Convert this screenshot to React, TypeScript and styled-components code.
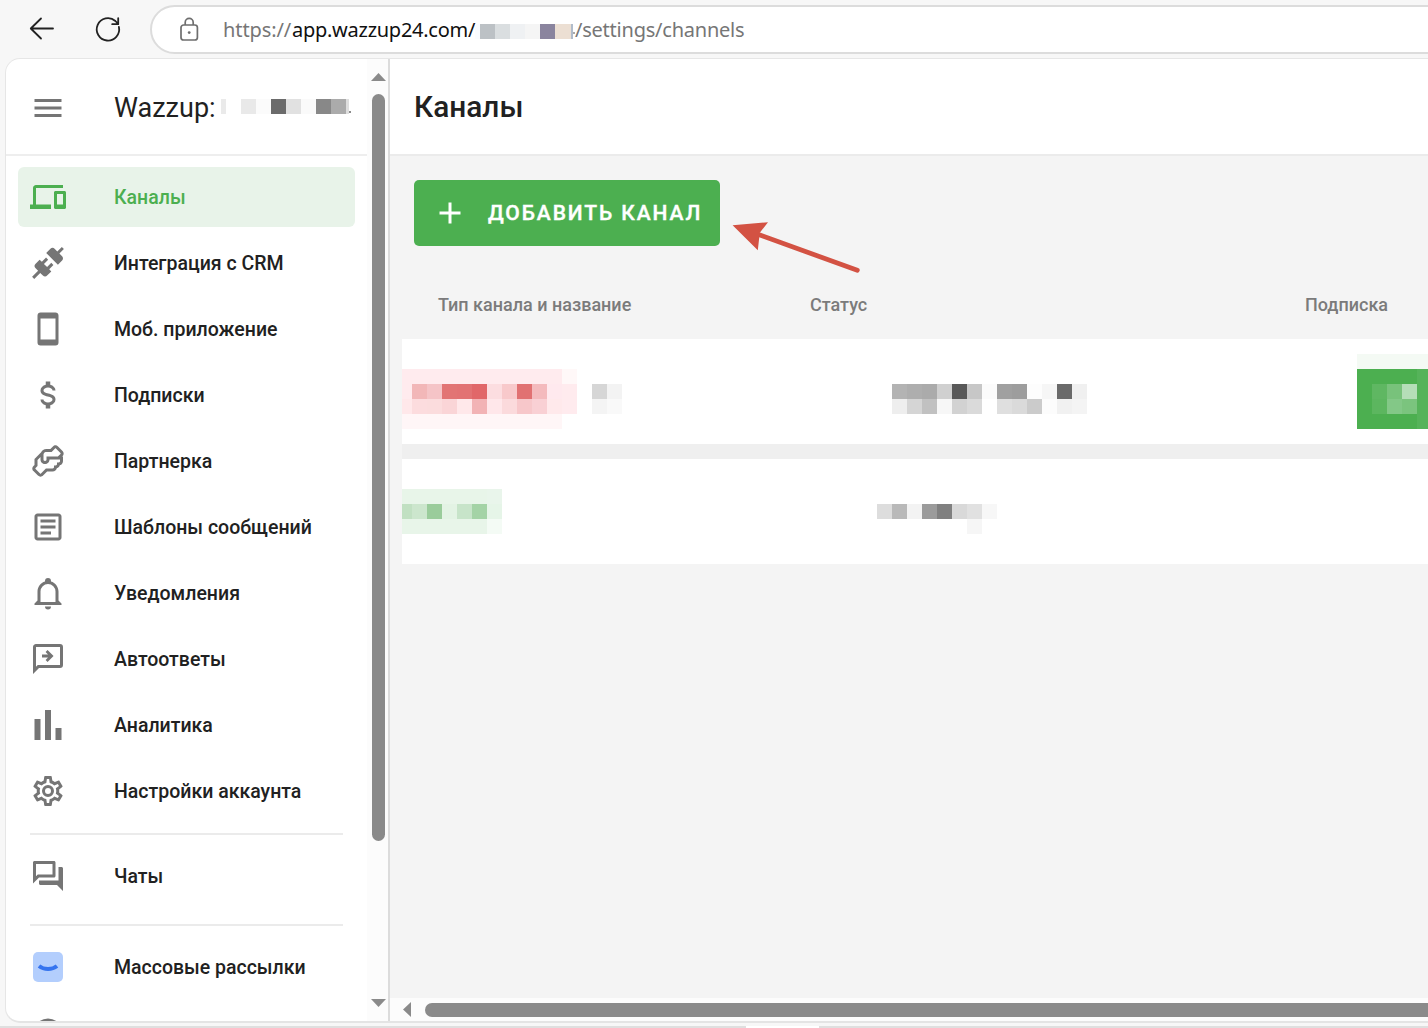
import React from "react";
import styled, { createGlobalStyle } from "styled-components";

const GlobalStyle = createGlobalStyle`
  * { box-sizing: border-box; }
  html, body { margin: 0; padding: 0; }
  body {
    width: 1428px;
    height: 1028px;
    overflow: hidden;
    background: #f7f7f7;
    font-family: Roboto, "Liberation Sans", sans-serif;
    color: #212121;
  }
`;

const Window = styled.div`
  display: flex;
  flex-direction: column;
  width: 1428px;
  height: 1028px;
  overflow: hidden;
`;

/* Browser toolbar */

const Toolbar = styled.header`
  display: flex;
  flex: none;
  align-items: flex-start;
  height: 58px;
  padding-top: 5px;
`;

const ToolButtons = styled.div`
  display: flex;
  flex: none;
  gap: 30px;
  width: 150px;
  height: 48px;
  padding-left: 24px;
  align-items: center;
`;

const AddressBar = styled.div`
  display: flex;
  flex: none;
  align-items: center;
  width: 1320px;
  height: 49px;
  padding-left: 25px;
  background: #fff;
  border: 2px solid #dcdcdc;
  border-radius: 25px;
`;

const Url = styled.div`
  display: flex;
  align-items: center;
  margin-left: 22px;
  height: 45px;
  font-family: "Noto Sans", "Open Sans", sans-serif;
  font-size: 20px;
  color: #767676;
  white-space: nowrap;
`;

const UrlPart = styled.span<{ $width: number; $strong?: boolean; $spacing: number }>`
  display: block;
  width: ${(p) => p.$width}px;
  letter-spacing: ${(p) => p.$spacing}px;
  color: ${(p) => (p.$strong ? "#101010" : "#767676")};
`;

/* Page frame */

const Page = styled.div`
  display: flex;
  flex: none;
  width: 1440px;
  height: 965px;
  margin-left: 5px;
  background: #fff;
  border: 1px solid #e6e6e6;
  border-bottom: 2px solid #e4e4e4;
  border-radius: 15px 0 0 15px;
  overflow: hidden;
`;

const Sidebar = styled.aside`
  display: flex;
  flex: none;
  width: 384px;
  border-right: 2px solid #dcdcdc;
`;

const SidebarContent = styled.div`
  flex: none;
  width: 361px;
  height: 962px;
  overflow: hidden;
`;

const Brand = styled.div`
  display: flex;
  align-items: center;
  height: 97px;
  padding: 2px 0 0 24px;
  border-bottom: 2px solid #eeeeee;
  color: #212121;
  svg { color: #757575; }
`;

const BrandName = styled.div`
  width: 107px;
  margin-left: 48px;
  font-size: 27px;
  line-height: 36px;
`;

const Censored = styled.div<{ $above?: number; $below?: number }>`
  display: flex;
  flex: none;
  align-items: center;
  margin-top: ${(p) => p.$above ?? 0}px;
  margin-bottom: ${(p) => p.$below ?? 0}px;
`;

/* The sliver of a glyph that shows past the tiles */
const Speck = styled.i<{ $drop: number; $c: string }>`
  width: 2px;
  height: 2px;
  margin-top: ${(p) => p.$drop}px;
  background: ${(p) => p.$c};
`;

const Nav = styled.nav`
  display: flex;
  flex-direction: column;
  gap: 6px;
  padding: 11px 12px 0;
`;

const NavItem = styled.a<{ $active?: boolean }>`
  display: flex;
  flex: none;
  align-items: center;
  gap: 48px;
  height: 60px;
  padding-left: 12px;
  border-radius: 6px;
  font-size: 19.5px;
  font-weight: 500;
  white-space: nowrap;
  color: ${(p) => (p.$active ? "#4caf50" : "#212121")};
  background: ${(p) => (p.$active ? "#e8f3e9" : "transparent")};
  svg { color: ${(p) => (p.$active ? "#4caf50" : "#757575")}; }
`;

const NavLabel = styled.span`
  padding-top: 1px;
`;

const NavDivider = styled.hr<{ $before: number; $after: number }>`
  flex: none;
  width: 313px;
  height: 2px;
  margin: ${(p) => p.$before}px 0 ${(p) => p.$after}px 12px;
  border: 0;
  background: #ebebeb;
`;

const VScroll = styled.div`
  display: flex;
  flex-direction: column;
  align-items: center;
  width: 21px;
  padding: 14px 0 14px 2px;
  background: #fcfcfc;
`;

const VThumb = styled.div`
  width: 13px;
  height: 747px;
  margin: 13px 0 auto;
  border-radius: 7px;
  background: #8a8a8a;
`;

/* Main area */

const Main = styled.main`
  display: flex;
  flex-direction: column;
  flex: 1;
  background: #f4f4f4;
`;

const Title = styled.h1`
  flex: none;
  height: 97px;
  margin: 0;
  padding: 30px 0 0 24px;
  font-size: 29.8px;
  line-height: 36px;
  font-weight: 500;
  background: #fff;
  border-bottom: 2px solid #ebebeb;
`;

const Actions = styled.div`
  display: flex;
  padding: 24px 24px 0;
`;

const AddButton = styled.button`
  position: relative;
  display: flex;
  align-items: center;
  width: 306px;
  height: 66px;
  padding: 0 0 0 18px;
  border: 0;
  border-radius: 5px;
  background: #4caf50;
  color: #fff;
  font-family: inherit;
  font-size: 21px;
  font-weight: 500;
  letter-spacing: 1.9px;
  -webkit-text-stroke: 0.4px #fff;
  white-space: nowrap;
  svg:first-child { margin-right: 20px; }
`;

const Pointer = styled.svg`
  position: absolute;
  left: 314px;
  top: 35px;
  overflow: visible;
`;

const columns = "408px 495px 1fr";

const TableHead = styled.div`
  display: grid;
  grid-template-columns: ${columns};
  align-items: center;
  height: 93px;
  padding-top: 24px;
  margin-left: 12px;
  font-size: 18px;
  font-weight: 500;
  color: #7b7b7b;
  span:first-child { padding-left: 36px; }
`;

const Table = styled.div`
  display: flex;
  flex-direction: column;
  gap: 15px;
  margin-left: 12px;
  background: #efefef;
`;

const Row = styled.div`
  display: grid;
  grid-template-columns: ${columns};
  height: 105px;
  background: #fff;
`;

const Cell = styled.div<{ $left?: number; $top: number }>`
  padding: ${(p) => p.$top}px 0 0 ${(p) => p.$left ?? 0}px;
`;

const HScroll = styled.div`
  display: flex;
  align-items: center;
  height: 23px;
  margin-top: auto;
  padding-left: 13px;
  background: #fcfcfc;
`;

const HThumb = styled.div`
  flex: 1;
  height: 14px;
  margin-left: 14px;
  border-radius: 7px;
  background: #8a8a8a;
`;

const BottomEdge = styled.footer`
  display: flex;
  flex: none;
  height: 2px;
  margin-top: 3px;
  background: #dfdfdf;
`;

const BottomHandle = styled.div`
  width: 73px;
  margin-left: 746px;
  background: #fff;
`;

/* Censored fragments: strips of solid 15px tiles */

const MosaicBox = styled.div`
  display: flex;
  flex: none;
  flex-direction: column;
`;

const Strip = styled.div`
  display: flex;
  height: 15px;
`;

const Tile = styled.i<{ $c: string; $w: number }>`
  flex: none;
  width: ${(p) => p.$w}px;
  background: ${(p) => p.$c};
`;

/* Each tile is "colour" or "colour:width"; "-" leaves the tile empty. */
const Mosaic = ({ rows }: { rows: string[] }) => (
  <MosaicBox>
    {rows.map((row, y) => (
      <Strip key={y}>
        {row.split(" ").map((t, x) => {
          const [c, w] = t.split(":");
          return <Tile key={x} $c={c === "-" ? "transparent" : "#" + c} $w={w ? Number(w) : 15} />;
        })}
      </Strip>
    ))}
  </MosaicBox>
);

/* Icons */

const IconSvg = styled.svg`
  display: block;
  flex: none;
`;

const Icon = ({ d }: { d: string }) => (
  <IconSvg width="36" height="36" viewBox="0 0 24 24" fill="currentColor">
    <path fillRule="evenodd" d={d} />
  </IconSvg>
);

const paths = {
  menu: "M3 6h18v2H3V6m0 5h18v2H3v-2m0 5h18v2H3v-2Z",
  plus: "M19 13h-6v6h-2v-6H5v-2h6V5h2v6h6v2Z",
  devices:
    "M4 6h18V4H4c-1.1 0-2 .9-2 2v11H0v3h14v-3H4V6zm19 2h-6c-.55 0-1 .45-1 1v10c0 .55.45 1 1 1h6c.55 0 1-.45 1-1V9c0-.55-.45-1-1-1zm-1 9h-4v-7h4v7z",
  connection:
    "M21.4 7.5C22.2 8.3 22.2 9.6 21.4 10.3L18.6 13.1L10.8 5.3L13.6 2.5C14.4 1.7 15.7 1.7 16.4 2.5L18.2 4.3L21.2 1.3L22.6 2.7L19.6 5.7L21.4 7.5M15.6 13.3L14.2 11.9L11.4 14.7L9.3 12.6L12.1 9.8L10.7 8.4L7.9 11.2L6.4 9.8L3.6 12.6C2.8 13.4 2.8 14.7 3.6 15.4L5.4 17.2L1.4 21.2L2.8 22.6L6.8 18.6L8.6 20.4C9.4 21.2 10.7 21.2 11.4 20.4L14.2 17.6L12.8 16.2L15.6 13.3Z",
  phone: "M17,19H7V5H17M17,1H7C5.89,1 5,1.89 5,3V21A2,2 0 0,0 7,23H17A2,2 0 0,0 19,21V3C19,1.89 18.1,1 17,1Z",
  dollar:
    "M7,15H9C9,16.08 10.37,17 12,17C13.63,17 15,16.08 15,15C15,13.9 13.96,13.5 11.76,12.97C9.64,12.44 7,11.78 7,9C7,7.21 8.47,5.69 10.5,5.18V3H13.5V5.18C15.53,5.69 17,7.21 17,9H15C15,7.92 13.63,7 12,7C10.37,7 9,7.92 9,9C9,10.1 10.04,10.5 12.24,11.03C14.36,11.56 17,12.22 17,15C17,16.79 15.53,18.31 13.5,18.82V21H10.5V18.82C8.47,18.31 7,16.79 7,15Z",
  handshake:
    "M21.71 8.71C22.96 7.46 22.39 6 21.71 5.29L18.71 2.29C17.45 1.04 16 1.61 15.29 2.29L13.59 4H11C9.1 4 8 5 7.44 6.15L3 10.59V14.59L2.29 15.29C1.04 16.55 1.61 18 2.29 18.71L5.29 21.71C5.83 22.25 6.41 22.45 6.96 22.45C7.67 22.45 8.32 22.1 8.71 21.71L11.41 19H15C16.7 19 17.56 17.94 17.87 16.9C19 16.6 19.62 15.74 19.87 14.9C21.42 14.5 22 13.03 22 12V9H21.41L21.71 8.71M20 12C20 12.45 19.81 13 19 13L18 13L18 14C18 14.45 17.81 15 17 15L16 15L16 16C16 16.45 15.81 17 15 17H10.59L7.31 20.28C7 20.57 6.82 20.4 6.71 20.29L3.72 17.31C3.43 17 3.6 16.82 3.71 16.71L5 15.41V11.41L7 9.41V11C7 12.21 7.8 14 10 14S13 12.21 13 11H20V12M20.29 7.29L18.59 9H11V11C11 11.45 10.81 12 10 12S9 11.45 9 11V8C9 7.54 9.17 6 11 6H14.41L16.69 3.72C17 3.43 17.18 3.6 17.29 3.71L20.28 6.69C20.57 7 20.4 7.18 20.29 7.29Z",
  article:
    "M19 5v14H5V5h14m0-2H5c-1.1 0-2 .9-2 2v14c0 1.1.9 2 2 2h14c1.1 0 2-.9 2-2V5c0-1.1-.9-2-2-2zM14 17H7v-2h7v2zm3-4H7v-2h10v2zm0-4H7V7h10v2z",
  bell:
    "M10,21H14A2,2 0 0,1 12,23A2,2 0 0,1 10,21M21,19V20H3V19L5,17V11C5,7.9 7.03,5.17 10,4.29C10,4.19 10,4.1 10,4A2,2 0 0,1 12,2A2,2 0 0,1 14,4C14,4.1 14,4.19 14,4.29C16.97,5.17 19,7.9 19,11V17L21,19M17,11A5,5 0 0,0 12,6A5,5 0 0,0 7,11V18H17V11Z",
  autoReply:
    "M20 2A2 2 0 0 1 22 4V16A2 2 0 0 1 20 18H6L2 22V4C2 2.9 2.9 2 4 2H20M4 4V17.17L5.17 16H20V4H4M11.7 6L15.7 10L11.7 14L10.4 12.6L12 11H8V9H12L10.4 7.4Z",
  poll: "M3,22V8H7V22H3M10,22V2H14V22H10M17,22V14H21V22H17Z",
  cog:
    "M12,8A4,4 0 0,1 16,12A4,4 0 0,1 12,16A4,4 0 0,1 8,12A4,4 0 0,1 12,8M12,10A2,2 0 0,0 10,12A2,2 0 0,0 12,14A2,2 0 0,0 14,12A2,2 0 0,0 12,10M10,22C9.75,22 9.54,21.82 9.5,21.58L9.13,18.93C8.5,18.68 7.96,18.34 7.44,17.94L4.95,18.95C4.73,19.03 4.46,18.95 4.34,18.73L2.34,15.27C2.21,15.05 2.27,14.78 2.46,14.63L4.57,12.97L4.5,12L4.57,11L2.46,9.37C2.27,9.22 2.21,8.95 2.34,8.73L4.34,5.27C4.46,5.05 4.73,4.96 4.95,5.05L7.44,6.05C7.96,5.66 8.5,5.32 9.13,5.07L9.5,2.42C9.54,2.18 9.75,2 10,2H14C14.25,2 14.46,2.18 14.5,2.42L14.87,5.07C15.5,5.32 16.04,5.66 16.56,6.05L19.05,5.05C19.27,4.96 19.54,5.05 19.66,5.27L21.66,8.73C21.79,8.95 21.73,9.22 21.54,9.37L19.43,11L19.5,12L19.43,13L21.54,14.63C21.73,14.78 21.79,15.05 21.66,15.27L19.66,18.73C19.54,18.95 19.27,19.04 19.05,18.95L16.56,17.95C16.04,18.34 15.5,18.68 14.87,18.93L14.5,21.58C14.46,21.82 14.25,22 14,22H10M11.25,4L10.88,6.61C9.68,6.86 8.62,7.5 7.85,8.39L5.44,7.35L4.69,8.65L6.8,10.2C6.4,11.37 6.4,12.64 6.8,13.8L4.68,15.36L5.43,16.66L7.86,15.62C8.63,16.5 9.68,17.14 10.87,17.38L11.24,20H12.76L13.13,17.39C14.32,17.14 15.37,16.5 16.14,15.62L18.57,16.66L19.32,15.36L17.2,13.81C17.6,12.64 17.6,11.37 17.2,10.2L19.31,8.65L18.56,7.35L16.15,8.39C15.38,7.5 14.32,6.86 13.12,6.62L12.75,4H11.25Z",
  chats:
    "M15 4v7H5.17L4 12.17V4h11m1-2H3c-.55 0-1 .45-1 1v14l4-4h10c.55 0 1-.45 1-1V3c0-.55-.45-1-1-1zm5 4h-2v9H6v2c0 .55.45 1 1 1h11l4 4V7c0-.55-.45-1-1-1z",
  circle: "M12 2.3a9.7 9.7 0 1 0 0 19.4a9.7 9.7 0 0 0 0-19.4m0 2a7.7 7.7 0 1 1 0 15.4a7.7 7.7 0 0 1 0-15.4Z",
};

const items: { icon: keyof typeof paths; label: string; active?: boolean }[] = [
  { icon: "devices", label: "Каналы", active: true },
  { icon: "connection", label: "Интеграция с CRM" },
  { icon: "phone", label: "Моб. приложение" },
  { icon: "dollar", label: "Подписки" },
  { icon: "handshake", label: "Партнерка" },
  { icon: "article", label: "Шаблоны сообщений" },
  { icon: "bell", label: "Уведомления" },
  { icon: "autoReply", label: "Автоответы" },
  { icon: "poll", label: "Аналитика" },
  { icon: "cog", label: "Настройки аккаунта" },
];

const BackIcon = () => (
  <IconSvg width="36" height="36" viewBox="0 0 36 36" fill="none" stroke="#222" strokeWidth="1.8" strokeLinecap="round" strokeLinejoin="round">
    <path d="M29 17.5H7M17 7.5L6.8 17.5L17 27.5" />
  </IconSvg>
);

const ReloadIcon = () => (
  <IconSvg width="36" height="36" viewBox="0 0 36 36" fill="none" stroke="#222" strokeWidth="1.8" strokeLinecap="round" strokeLinejoin="round">
    <path d="M28.9 16A11.2 11.2 0 1 1 25.4 10L28.2 13M28.2 7.2V13.2H22.2" />
  </IconSvg>
);

const LockIcon = () => (
  <IconSvg width="24" height="26" viewBox="0 0 24 26" fill="none" stroke="#6e6e6e" strokeWidth="1.7">
    <rect x="4" y="8" width="16.4" height="15" rx="2.6" />
    <path d="M8.2 8V5.4a4 4 0 0 1 8 0V8" />
    <circle cx="12.2" cy="15.6" r="1.4" fill="#6e6e6e" stroke="none" />
  </IconSvg>
);

const MailingIcon = () => (
  <IconSvg width="36" height="36" viewBox="0 0 36 36">
    <rect x="3" y="3" width="30" height="30" rx="5" fill="#b3cefd" />
    <path d="M9 17C14 21 22 21 27 17" fill="none" stroke="#3574ef" strokeWidth="4" />
  </IconSvg>
);

const Triangle = ({ points, w, h }: { points: string; w: number; h: number }) => (
  <IconSvg width={w} height={h} viewBox={`0 0 ${w} ${h}`}>
    <polygon points={points} fill="#8a8a8a" />
  </IconSvg>
);

export default function App() {
  return (
    <Window>
      <GlobalStyle />
      <Toolbar>
        <ToolButtons>
          <BackIcon />
          <ReloadIcon />
        </ToolButtons>
        <AddressBar>
          <LockIcon />
          <Url>
            <UrlPart $width={69} $spacing={-0.1}>https://</UrlPart>
            <UrlPart $width={183} $spacing={-0.27} $strong>app.wazzup24.com/</UrlPart>
            <Censored $above={3}>
              <Mosaic rows={["fafcff:5 bcc1c5 dadee0 eff1f3 f5f5f5 8a849e ecdfd3:16 b0bccb:2"]} />
              <Speck $drop={3} $c="#a8a8a8" />
            </Censored>
            <UrlPart $width={180} $spacing={-0.23}>/settings/channels</UrlPart>
          </Url>
        </AddressBar>
      </Toolbar>
      <Page>
        <Sidebar>
          <SidebarContent>
            <Brand>
              <Icon d={paths.menu} />
              <BrandName>Wazzup:</BrandName>
              <Censored $below={2}>
                <Mosaic rows={["eaeaea:5 -:15 e9e9e9 fbfbfb 6b6b6b e1e1e1 fafafa 888888 ababab dedede:3"]} />
                <Speck $drop={11} $c="#8c8c8c" />
              </Censored>
            </Brand>
            <Nav>
              {items.map((it) => (
                <NavItem key={it.icon} $active={it.active}>
                  <Icon d={paths[it.icon]} />
                  <NavLabel>{it.label}</NavLabel>
                </NavItem>
              ))}
              <NavDivider $before={6} $after={5} />
              <NavItem>
                <Icon d={paths.chats} />
                <NavLabel>Чаты</NavLabel>
              </NavItem>
              <NavDivider $before={12} $after={5} />
              <NavItem>
                <MailingIcon />
                <NavLabel>Массовые рассылки</NavLabel>
              </NavItem>
              <NavItem>
                <Icon d={paths.circle} />
              </NavItem>
            </Nav>
          </SidebarContent>
          <VScroll>
            <Triangle w={15} h={8} points="7.5,0 15,8 0,8" />
            <VThumb />
            <Triangle w={15} h={8} points="0,0 15,0 7.5,8" />
          </VScroll>
        </Sidebar>
        <Main>
          <Title>Каналы</Title>
          <Actions>
            <AddButton>
              <Icon d={paths.plus} />
              ДОБАВИТЬ КАНАЛ
              <Pointer width="132" height="60" viewBox="728 215 132 60">
                <path d="M760 235L857.3 270.3" stroke="#d35243" strokeWidth="4.8" strokeLinecap="round" />
                <path d="M732.6 225.3L768 222.2L759.8 232.8L757.8 250.2Z" fill="#d35243" />
              </Pointer>
            </AddButton>
          </Actions>
          <TableHead>
            <span>Тип канала и название</span>
            <span>Статус</span>
            <span>Подписка</span>
          </TableHead>
          <Table>
            <Row>
              <Cell $top={30}>
                <Mosaic
                  rows={[
                    "ffebee:160 fff8f8",
                    "ffebee:10 f2b7b8 f5c4c7 e27474 e27273 e16769 fcdde0 f8c9cb e17172 f4babd ffe9ee ffebee - d6d6d6 f3f3f3",
                    "ffe8ea:10 fcdcde fbdcdd fad5d7 ffe8ea f2b3b5 ffe7ea fbdadc f7c7ca f9d0d4 ffe9eb ffebee - f4f4f4 f9f9f9",
                    "fff6f7:160",
                  ]}
                />
              </Cell>
              <Cell $top={45} $left={82}>
                <Mosaic
                  rows={[
                    "b3b3b3 aeaeae ababab d0d0d0 585858 c7c7c7 fbfbfb a0a0a0 9d9d9d fdfdfd f6f6f6 6a6a6a f0f0f0",
                    "eeeeee d5d5d5 c1c1c1 f7f7f7 d2d2d2 dadada - dfdfdf dadada cbcbcb fcfcfc f1f1f1 f4f4f4",
                  ]}
                />
              </Cell>
              <Cell $top={15} $left={52}>
                <Mosaic
                  rows={[
                    "f4faf4:71",
                    "4caf50:60 56b35a:11",
                    "4caf50 5fb762 78c27b b5deb8 56b35a:11",
                    "4caf50 5cb65f 83c887 7bc47e 56b35a:11",
                    "4caf50:60 56b35a:11",
                  ]}
                />
              </Cell>
            </Row>
            <Row>
              <Cell $top={30}>
                <Mosaic
                  rows={[
                    "e8f5e9:85 e9f5eb",
                    "c1e0c2:10 cce6cd 9acc9b e3f3e4 c7e4c9 a4d3a6 e6f5e8",
                    "e8f5e9:85 f4fbf5",
                  ]}
                />
              </Cell>
              <Cell $top={45} $left={67}>
                <Mosaic rows={["dddddd b9b9b9 f3f3f3 9b9b9b 808080 d9d9d9 e1e1e1 f7f7f7", "-:90 f6f6f6"]} />
              </Cell>
            </Row>
          </Table>
          <HScroll>
            <Triangle w={8} h={15} points="8,0 8,15 0,7.5" />
            <HThumb />
          </HScroll>
        </Main>
      </Page>
      <BottomEdge>
        <BottomHandle />
      </BottomEdge>
    </Window>
  );
}
